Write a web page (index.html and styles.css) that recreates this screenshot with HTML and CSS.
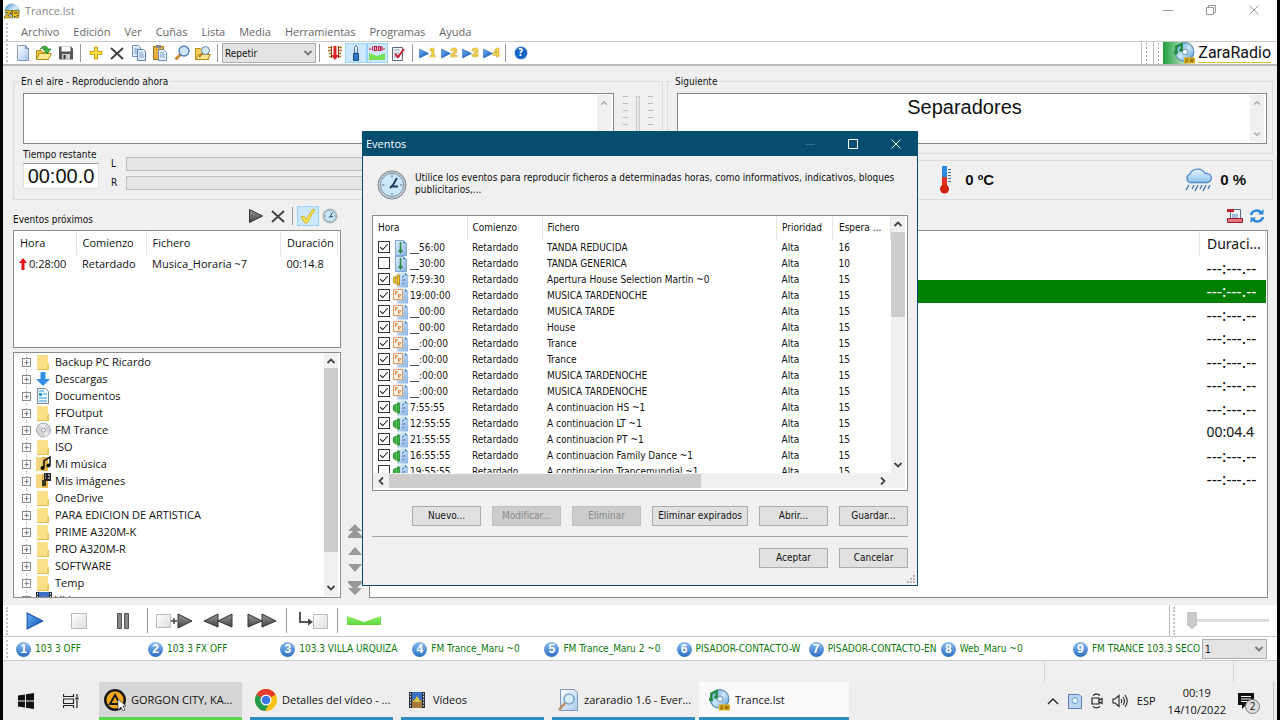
FILE: index.html
```html
<!DOCTYPE html>
<html lang="es">
<head>
    <meta charset="UTF-8">
    <meta name="viewport" content="width=device-width, initial-scale=1.0">
    <title>Trance.lst</title>
    <link rel="stylesheet" href="styles.css">
</head>
<body>
    <!-- Iconos compartidos -->
    <svg class="sprites" width="0" height="0" aria-hidden="true">
        <defs>
            <linearGradient id="gBlue" x1="0" y1="0" x2="1" y2="1"><stop offset="0" stop-color="#6db4f2"/><stop offset="1" stop-color="#0d4fb5"/></linearGradient>
            <linearGradient id="gGray" x1="0" y1="0" x2="0" y2="1"><stop offset="0" stop-color="#999"/><stop offset="1" stop-color="#444"/></linearGradient>
            <linearGradient id="gPage" x1="0" y1="0" x2="1" y2="1"><stop offset="0" stop-color="#fff"/><stop offset="1" stop-color="#a9c8ec"/></linearGradient>
            <linearGradient id="gPageBlue" x1="0" y1="0" x2="1" y2="1"><stop offset="0" stop-color="#e4f0fb"/><stop offset="1" stop-color="#86b2e2"/></linearGradient>
            <linearGradient id="gStop" x1="0" y1="0" x2="1" y2="1"><stop offset="0" stop-color="#fff"/><stop offset="1" stop-color="#ddd"/></linearGradient>
            <linearGradient id="gCloud" x1="0" y1="0" x2="0" y2="1"><stop offset="0" stop-color="#e6f4ff"/><stop offset="1" stop-color="#8fc2ee"/></linearGradient>
            <linearGradient id="gDisc" x1="0" y1="0" x2="1" y2="1"><stop offset="0" stop-color="#3a86c8"/><stop offset=".5" stop-color="#cfe9fa"/><stop offset="1" stop-color="#3b8ccb"/></linearGradient>
            <linearGradient id="gHill" x1="0" y1="0" x2="0" y2="1"><stop offset="0" stop-color="#8cf06c"/><stop offset="1" stop-color="#5fd83c"/></linearGradient>
        </defs>
        <symbol id="i-zara" viewBox="0 0 20 20">
            <circle cx="10.500" cy="9" r="8.500" fill="url(#gDisc)" stroke="#5d8db0"/>
            <circle cx="11" cy="9" r="2.500" fill="#eef7fd" stroke="#7aa5c4"/>
            <path d="M3 9V4l5-2v5" fill="none" stroke="#1d8a3c" stroke-width="2"/>
            <circle cx="2.700" cy="9.500" r="1.800" fill="#1d8a3c"/><circle cx="7.300" cy="7.500" r="1.500" fill="#1d8a3c"/>
            <path d="M10 14h10v5.500H10z" fill="#e0b31f"/>
            <path d="M11 15.500h3l-3 2.500h3M16 18.500V15.500h2.500V17H16l2.500 1.500" fill="none" stroke="#7a5a06" stroke-width=".7"/>
        </symbol>
        <symbol id="i-zr" viewBox="0 0 16 16">
            <circle cx="8" cy="8" r="7.500" fill="url(#gDisc)"/>
            <path d="M1 8.500h5.500L1.500 14H7M9.500 15V8.500H14V11.500H9.500l5 3" fill="none" stroke="#5d4a08" stroke-width="2.600"/>
            <path d="M1 8.500h5.500L1.500 14H7M9.500 15V8.500H14V11.500H9.500l5 3" fill="none" stroke="#e8c32c" stroke-width="1.300"/>
        </symbol>
        <symbol id="i-new" viewBox="0 0 16 16"><path d="M2.500.5h8l3 3v12h-11z" fill="url(#gPage)" stroke="#8699b5"/><path d="M10.500.5v3h3" fill="#8db7e8" stroke="#6d8fbd"/></symbol>
        <symbol id="i-open" viewBox="0 0 16 16"><path d="M.5 14.500V5.500h5l1 2h6v7z" fill="#f0c33c" stroke="#b58b1b"/><path d="M.5 14.500l3-6h12l-3 6z" fill="#fde88c" stroke="#b58b1b"/><path d="M4 4c3-4 7-4 8 0h3l-4 5-4-5h2C8 3 6 3 4 4z" fill="#3fae3c" stroke="#1b7a1d" stroke-width=".6"/></symbol>
        <symbol id="i-save" viewBox="0 0 16 16"><path d="M1 1.500h12l2 2v11H1z" fill="#555"/><path d="M3.500 1.500h9v5h-9z" fill="#fff"/><path d="M4 9h8v5.500H4z" fill="#ccc"/><path d="M5.500 10h2v4h-2z" fill="#333"/></symbol>
        <symbol id="i-plus" viewBox="0 0 16 16"><path d="M6.500 2h3v4.500H14v3H9.500V14h-3V9.500H2v-3h4.500z" fill="#ffe24a" stroke="#cf9f06"/></symbol>
        <symbol id="i-x" viewBox="0 0 16 16"><path d="M2 3l12 11M14 3L2 14" stroke="#444" stroke-width="2" fill="none"/></symbol>
        <symbol id="i-copy" viewBox="0 0 16 16"><path d="M1.500.5h6l2 2v9h-8z" fill="#e2edfa" stroke="#6f8fc0"/><path d="M3 4h4M3 6h5M3 8h5" stroke="#7d9fd0"/><path d="M6.500 4.500h6l2 2v9h-8z" fill="#e2edfa" stroke="#5c7fb8"/><path d="M8 8h4M8 10h5M8 12h5" stroke="#7d9fd0"/></symbol>
        <symbol id="i-paste" viewBox="0 0 16 16"><path d="M1.500 1.500h10v13h-10z" fill="#e9b13c" stroke="#99701a"/><path d="M4 0h5v3H4z" fill="#888"/><path d="M6.500 4.500h5l3 3v8h-8z" fill="#e4effb" stroke="#6b89b5"/><path d="M8 8h4M8 10h5M8 12h5" stroke="#7d9fd0"/></symbol>
        <symbol id="i-find" viewBox="0 0 16 16"><path d="M7 9l-5.500 5.500" stroke="#c98d33" stroke-width="3"/><circle cx="10" cy="6" r="5" fill="#cfe6fa" stroke="#4f7fc0" stroke-width="1.400"/></symbol>
        <symbol id="i-findf" viewBox="0 0 16 16"><path d="M.5 14.500v-11h5l1 2h7v9z" fill="#f5cf54" stroke="#b58b1b"/><path d="M.5 14.500l3-5h12l-3 5z" fill="#fde88c" stroke="#b58b1b"/><circle cx="10.500" cy="5.500" r="4" fill="#d5eafa" stroke="#5f83ad"/><path d="M7.500 8.500L4 12" stroke="#b07c31" stroke-width="2"/></symbol>
        <symbol id="i-meter" viewBox="0 0 16 16"><path d="M1 2.500h4M1 5.500h4M2 8.500h3M2 11.500h3M11 2.500h4M11 5.500h4M11 8.500h3M11 11.500h3" stroke="#a8781c" stroke-width="1.400"/><path d="M4.500 1v12M11.500 1v12" stroke="#8e341c"/><path d="M6.500 1h3v9h2.500l-4 5-4-5h2.500z" fill="#d92222"/></symbol>
        <symbol id="i-mic" viewBox="0 0 16 16"><path d="M6.500 2.500l1.500-2 1.500 2V8h-3z" fill="#dceaf5" stroke="#56718c"/><path d="M5.500 8.500h5v7h-5z" fill="#2f79c9" stroke="#174a84"/></symbol>
        <symbol id="i-onair" viewBox="0 0 16 16"><path d="M0 4h2M3.500 1.500v4M5.500 1.500v4h2v-4zM9.500 1.500h2v4h-2zM13 1.500v4M14 4h2" fill="none" stroke="#c9163c" stroke-width="1.200"/><path d="M0 8l8 3 8-3v7H0z" fill="#77e054"/></symbol>
        <symbol id="i-check" viewBox="0 0 16 16"><path d="M2.500 2.500h10v13h-10z" fill="#f4f7fb" stroke="#596779"/><path d="M4 5h6M4 8h5M4 12h6" stroke="#8b99ad"/><path d="M5 9l3 3 6-8" fill="none" stroke="#c8202c" stroke-width="2"/></symbol>
        <symbol id="i-play" viewBox="0 0 16 16"><path d="M1 1l14 7-14 7z" fill="url(#gBlue)" stroke="#1557b0"/></symbol>
        <symbol id="i-playg" viewBox="0 0 16 16"><path d="M1.500 1.500l13 6.500-13 6.500z" fill="url(#gGray)" stroke="#333"/></symbol>
        <symbol id="i-tick" viewBox="0 0 16 16"><path d="M1 9l3-1 2 3.500L13 1l2 .5L7 15H5z" fill="#ffe64c" stroke="#c9a51d" stroke-width=".8"/></symbol>
        <symbol id="i-clock" viewBox="0 0 32 32"><circle cx="16" cy="16" r="14" fill="#c3cad1" stroke="#75818c"/><circle cx="16" cy="16" r="11.500" fill="#cbe9fb" stroke="#7f93a5"/><path d="M16 6v2.500M16 24v2.500M6 16h2.500M24 16h2.500" stroke="#8a98a5" stroke-width="1.500"/><path d="M14 19l3-3 4-7M15 17.500h7" stroke="#1e3c5a" stroke-width="2" fill="none"/></symbol>
        <symbol id="i-folder" viewBox="0 0 16 16"><path d="M1 1h11v14H1z" fill="#fbe08a"/><path d="M11 10l2-1.500V15h-2z" fill="#f0c95c"/><path d="M1 15.500h12" stroke="#e3bb4c"/></symbol>
        <symbol id="i-down" viewBox="0 0 16 16"><path d="M4.500 1h5v7H14l-7 7-7-7h4.500z" fill="#3390e6"/></symbol>
        <symbol id="i-doc" viewBox="0 0 16 16"><path d="M1.500.5h8l3 3v12h-11z" fill="#eef7fc" stroke="#7a8790"/><path d="M3 5h3v3H3z" fill="#2e9bd0"/><path d="M3 3h5M7 6h4M3 10h8M3 13h8" stroke="#2e9bd0"/></symbol>
        <symbol id="i-cd" viewBox="0 0 16 16"><circle cx="7.500" cy="8" r="7" fill="#d3d5d8" stroke="#a8abb0"/><path d="M7.500 8L4 2h6zM7.500 8l6 3-4 4z" fill="#ececee"/><circle cx="7.500" cy="8" r="2" fill="#f7f7f7" stroke="#999"/></symbol>
        <symbol id="i-music" viewBox="0 0 16 16"><path d="M0 1h12v14H0z" fill="#e2b546"/><path d="M0 1h6v14H0z" fill="#f6d77d"/><path d="M8 12V5l6-4v8" fill="none" stroke="#111" stroke-width="1.500"/><circle cx="6.500" cy="12" r="2" fill="#111"/><circle cx="12.500" cy="9.500" r="2" fill="#111"/></symbol>
        <symbol id="i-pics" viewBox="0 0 16 16"><path d="M0 1h12v14H0z" fill="#e2b546"/><path d="M0 1h6v14H0z" fill="#f6d77d"/><path d="M8 0h7v8H8z" fill="#222"/><path d="M9 2h1M12 2h2M9 5h1M12 5h2" stroke="#fff"/><path d="M6 7h4v6H6z" fill="#3b3421"/></symbol>
        <symbol id="i-film" viewBox="0 0 16 16"><path d="M0 0h16v16H0z" fill="#26303f"/><path d="M3 0h10v16H3z" fill="#3b6fc4"/><path d="M3 8h10v8H3z" fill="#a57a3a"/><path d="M4 10l4-6 4 6z" fill="#d6c04a"/><path d="M1.500 1v15M14.500 1v15" stroke="#ddd" stroke-dasharray="1.500 1.500"/></symbol>
        <symbol id="i-evdown" viewBox="0 0 16 16"><path d="M2.500.5h8l3 3v12h-11z" fill="url(#gPageBlue)" stroke="#7fa6d2"/><path d="M10.500.5v3h3z" fill="#4e86c4"/><path d="M7.500 2v9" stroke="#2a8a3f" stroke-width="1.500"/><path d="M5 10h5l-2.500 4z" fill="#2a8a3f"/></symbol>
        <symbol id="i-evpage" viewBox="0 0 16 16"><path d="M4 .5h8l3 3v12H4z" fill="url(#gPageBlue)"/><path d="M12 .5v3h3z" fill="#4e86c4"/></symbol>
        <symbol id="i-evgreen" viewBox="0 0 16 16"><use href="#i-evpage"/><path d="M0 6l3-2v8l-3-2zM4 3h2.500v10H4z" fill="#37b53d" stroke="#1e8427" stroke-width=".7"/><path d="M9 5l2-1M9 8h3M9 11l2 1" stroke="#3d74b2"/></symbol>
        <symbol id="i-evyellow" viewBox="0 0 16 16"><use href="#i-evpage"/><path d="M0 6l3-2v8l-3-2zM4 3h2.500v10H4z" fill="#f0c030" stroke="#a57a10" stroke-width=".7"/><path d="M9 5l2-1M9 8h3M9 11l2 1" stroke="#3d74b2"/></symbol>
        <symbol id="i-evrand" viewBox="0 0 16 16"><use href="#i-evpage"/><path d="M.5 1.500h9v10h-9z" fill="#fff5ea" stroke="#e2945a"/><path d="M2.500 7V3.500h2M2.500 5h2M5.500 10V6.500h2v1.500h-2l2 2" fill="none" stroke="#d9762f" stroke-width=".8"/></symbol>
        <symbol id="i-up" viewBox="0 0 10 6"><path d="M1.500 5L5 1.500 8.500 5" fill="none" stroke="currentColor" stroke-width="1.800"/></symbol>
        <symbol id="i-dn" viewBox="0 0 10 6"><path d="M1.500 1L5 4.500 8.500 1" fill="none" stroke="currentColor" stroke-width="1.800"/></symbol>
        <symbol id="i-lt" viewBox="0 0 6 10"><path d="M5 1.500L1.500 5 5 8.500" fill="none" stroke="currentColor" stroke-width="1.800"/></symbol>
        <symbol id="i-rt" viewBox="0 0 6 10"><path d="M1 1.500L4.500 5 1 8.500" fill="none" stroke="currentColor" stroke-width="1.800"/></symbol>
    </svg>

    <div class="app">
        <header class="titlebar">
            <svg class="ico"><use href="#i-zr"/></svg>
            <span>Trance.lst</span>
            <div class="win-buttons">
                <button aria-label="Minimizar"><svg width="10" height="10"><path d="M0 5.500h10" stroke="#999"/></svg></button>
                <button aria-label="Restaurar"><svg width="10" height="10" fill="none" stroke="#999"><path d="M.5 2.500h7v7h-7zM2.500 2.500v-2h7v7h-2"/></svg></button>
                <button aria-label="Cerrar"><svg width="10" height="10" stroke="#999"><path d="M.5.5l9 9M9.500.5l-9 9"/></svg></button>
            </div>
        </header>

        <nav class="menubar">
            <span class="grip"></span>
            <a href="#">Archivo</a>
            <a href="#">Edición</a>
            <a href="#">Ver</a>
            <a href="#">Cuñas</a>
            <a href="#">Lista</a>
            <a href="#">Media</a>
            <a href="#">Herramientas</a>
            <a href="#">Programas</a>
            <a href="#">Ayuda</a>
        </nav>

        <div class="toolbar">
            <span class="grip"></span>
            <div class="tools three">
                <button aria-label="Nuevo"><svg class="ico"><use href="#i-new"/></svg></button>
                <button aria-label="Abrir"><svg class="ico"><use href="#i-open"/></svg></button>
                <button aria-label="Guardar"><svg class="ico"><use href="#i-save"/></svg></button>
            </div>
            <span class="sep"></span>
            <div class="tools six">
                <button aria-label="Añadir"><svg class="ico"><use href="#i-plus"/></svg></button>
                <button aria-label="Borrar"><svg class="ico"><use href="#i-x"/></svg></button>
                <button aria-label="Copiar"><svg class="ico"><use href="#i-copy"/></svg></button>
                <button aria-label="Pegar"><svg class="ico"><use href="#i-paste"/></svg></button>
                <button aria-label="Buscar"><svg class="ico"><use href="#i-find"/></svg></button>
                <button aria-label="Buscar fichero"><svg class="ico"><use href="#i-findf"/></svg></button>
            </div>
            <span class="sep"></span>
            <div class="combo mode">
                <select aria-label="Modo"><option>Repetir</option></select>
                <svg width="10" height="6"><use href="#i-dn"/></svg>
            </div>
            <span class="sep"></span>
            <div class="tools four">
                <button aria-label="Vúmetro"><svg class="ico"><use href="#i-meter"/></svg></button>
                <button class="on" aria-label="Micrófono"><svg class="ico"><use href="#i-mic"/></svg></button>
                <button class="on" aria-label="Mezcla"><svg class="ico"><use href="#i-onair"/></svg></button>
                <button aria-label="Opciones"><svg class="ico"><use href="#i-check"/></svg></button>
            </div>
            <span class="sep"></span>
            <div class="tools four players">
                <button><svg width="10" height="11"><use href="#i-play"/></svg>1</button>
                <button><svg width="10" height="11"><use href="#i-play"/></svg>2</button>
                <button><svg width="10" height="11"><use href="#i-play"/></svg>3</button>
                <button><svg width="10" height="11"><use href="#i-play"/></svg>4</button>
            </div>
            <span class="sep"></span>
            <button class="help" aria-label="Ayuda"><span>?</span></button>
            <div class="brand">
                <span class="grip line"></span>
                <span class="grip line"></span>
                <div class="brand-disc"><svg width="22" height="22"><use href="#i-zara"/></svg></div>
                <span class="brand-name">ZaraRadio</span>
            </div>
        </div>

        <main>
            <div class="top">
                <fieldset class="onair">
                    <legend>En el aire - Reproduciendo ahora</legend>
                    <div class="onair-main">
                        <div class="memo">
                            <div class="memo-text"></div>
                            <div class="vscroll off"><svg width="8" height="6"><use href="#i-up"/></svg><svg width="8" height="6"><use href="#i-dn"/></svg></div>
                        </div>
                        <div class="meters">
                            <div class="remaining">
                                <span>Tiempo restante</span>
                                <output>00:00.0</output>
                            </div>
                            <div class="vu"><span>L</span><div></div><span>R</span><div></div></div>
                        </div>
                    </div>
                    <div class="volume">
                        <span class="ticks"></span>
                        <input type="range" class="vrange" aria-label="Volumen" value="0" disabled>
                        <span class="ticks"></span>
                    </div>
                </fieldset>
                <div class="top-right">
                    <fieldset class="next">
                        <legend>Siguiente</legend>
                        <div class="memo">
                            <div class="memo-text">Separadores</div>
                            <div class="vscroll off"><svg width="8" height="6"><use href="#i-up"/></svg><svg width="8" height="6"><use href="#i-dn"/></svg></div>
                        </div>
                    </fieldset>
                    <div class="weather">
                        <div class="temp">
                            <svg width="12" height="28"><path d="M3 0h5v12H3z" fill="#2b8be0"/><path d="M3 11h5v10H3z" fill="#e03020"/><circle cx="5.500" cy="23" r="4.500" fill="#d3200f"/><path d="M9 3.500h3M9 6.500h3M9 9.500h3M9 12.500h3M9 15.500h3" stroke="#4b6f95"/></svg>
                            0 ºC
                        </div>
                        <div class="rain">
                            <svg width="30" height="24"><path d="M6 14.500a4.500 4.500 0 0 1 0-8.500 8 7 0 0 1 15-.5 5 4.500 0 0 1 2.500 9z" fill="url(#gCloud)" stroke="#4d8bc9" stroke-width="1.300"/><path d="M5 17l-3 5M10 17l-2 4M14 17l-3 6M18 17l-2 4M22 17l-3 6M26 17l-2 4" stroke="#3a74b8" stroke-width="1.300"/></svg>
                            0 %
                        </div>
                    </div>
                </div>
            </div>

            <div class="bottom">
                <div class="side">
                    <div class="side-head">
                        <span>Eventos próximos</span>
                        <button aria-label="Reproducir"><svg class="ico"><use href="#i-playg"/></svg></button>
                        <button aria-label="Quitar"><svg class="ico"><use href="#i-x"/></svg></button>
                        <span class="sep"></span>
                        <button class="on" aria-label="Activar eventos"><svg class="ico"><use href="#i-tick"/></svg></button>
                        <button aria-label="Eventos"><svg class="ico"><use href="#i-clock"/></svg></button>
                    </div>
                    <div class="upcoming">
                        <table>
                            <thead>
                                <tr><th class="u-hora">Hora</th><th class="u-com">Comienzo</th><th>Fichero</th><th class="u-dur">Duración</th></tr>
                            </thead>
                            <tbody>
                                <tr><td class="first"><svg width="8" height="12"><path d="M4 0l4 5H5.500v7h-3V5H0z" fill="#e3101c"/></svg>0:28:00</td><td>Retardado</td><td>Musica_Horaria ~7</td><td>00:14.8</td></tr>
                            </tbody>
                        </table>
                    </div>
                    <div class="tree">
                        <ul>
                            <li><svg class="ico"><use href="#i-folder"/></svg>Backup PC Ricardo</li>
                            <li><svg class="ico"><use href="#i-down"/></svg>Descargas</li>
                            <li><svg class="ico"><use href="#i-doc"/></svg>Documentos</li>
                            <li><svg class="ico"><use href="#i-folder"/></svg>FFOutput</li>
                            <li><svg class="ico"><use href="#i-cd"/></svg>FM Trance</li>
                            <li><svg class="ico"><use href="#i-folder"/></svg>ISO</li>
                            <li><svg class="ico"><use href="#i-music"/></svg>Mi música</li>
                            <li><svg class="ico"><use href="#i-pics"/></svg>Mis imágenes</li>
                            <li><svg class="ico"><use href="#i-folder"/></svg>OneDrive</li>
                            <li><svg class="ico"><use href="#i-folder"/></svg>PARA EDICION DE ARTISTICA</li>
                            <li><svg class="ico"><use href="#i-folder"/></svg>PRIME A320M-K</li>
                            <li><svg class="ico"><use href="#i-folder"/></svg>PRO A320M-R</li>
                            <li><svg class="ico"><use href="#i-folder"/></svg>SOFTWARE</li>
                            <li><svg class="ico"><use href="#i-folder"/></svg>Temp</li>
                            <li><svg class="ico"><use href="#i-film"/></svg>Vídeos</li>
                        </ul>
                        <div class="vscroll"><svg width="10" height="6"><use href="#i-up"/></svg><div class="thumb"></div><svg width="10" height="6"><use href="#i-dn"/></svg></div>
                    </div>
                </div>
                <div class="movers">
                    <button aria-label="Al principio"><svg width="14" height="14" fill="#999"><path d="M7 0l7 7H0zM7 5l7 7v2H0v-2z"/></svg></button>
                    <button aria-label="Subir"><svg width="14" height="8" fill="#999"><path d="M7 0l7 8H0z"/></svg></button>
                    <button aria-label="Bajar"><svg width="14" height="8" fill="#999"><path d="M7 8l7-8H0z"/></svg></button>
                    <button aria-label="Al final"><svg width="14" height="14" fill="#999"><path d="M7 14l7-7H0zM7 9l7-7V0H0v2z"/></svg></button>
                </div>
                <div class="playlist-col">
                    <div class="playlist-head">
                        <button aria-label="Exportar"><svg class="ico" viewBox="0 0 16 16"><path d="M3.500 1.500h10v9h-10z" fill="#eef3fa" stroke="#5a6b85"/><path d="M5 7h6M5 9h6" stroke="#5a86c4"/><path d="M0 1h7v3H0z" fill="#c2202c"/><path d="M.5 10.500h15v4H.5z" fill="#e2747c" stroke="#9d1a26"/></svg></button>
                        <button aria-label="Recargar"><svg class="ico" viewBox="0 0 16 16" fill="none" stroke="#2d8ad8" stroke-width="2.500"><path d="M2 7c1-5 8-6 10-2M14 9c-1 5-8 6-10 2"/><path d="M14.500 1v5.500H9zM1.500 15V9.500H7z" fill="#2d8ad8" stroke="none"/></svg></button>
                    </div>
                    <div class="playlist">
                        <table>
                            <thead><tr><th></th><th class="p-dur">Duraci...</th></tr></thead>
                            <tbody>
                                <tr><td></td><td>---:---.--</td></tr>
                                <tr class="current"><td></td><td>---:---.--</td></tr>
                                <tr><td></td><td>---:---.--</td></tr>
                                <tr><td></td><td>---:---.--</td></tr>
                                <tr><td></td><td>---:---.--</td></tr>
                                <tr><td></td><td>---:---.--</td></tr>
                                <tr><td></td><td>---:---.--</td></tr>
                                <tr><td></td><td class="time">00:04.4</td></tr>
                                <tr><td></td><td>---:---.--</td></tr>
                                <tr><td></td><td>---:---.--</td></tr>
                            </tbody>
                        </table>
                    </div>
                </div>
            </div>
        </main>

        <div class="transport">
            <span class="grip"></span>
            <button aria-label="Reproducir"><svg width="18" height="18"><use href="#i-play"/></svg></button>
            <button aria-label="Parar"><svg width="18" height="18"><path d="M1.500 1.500h15v15h-15z" fill="url(#gStop)" stroke="#bbb"/></svg></button>
            <button aria-label="Pausa"><svg width="14" height="18"><path d="M1.500 1.500h4v15h-4zM8.500 1.500h4v15h-4z" fill="#888" stroke="#555"/></svg></button>
            <span class="sep"></span>
            <button aria-label="Parar y seguir"><svg width="36" height="18"><path d="M.5 2.500h14v13H.5z" fill="url(#gStop)" stroke="#bbb"/><path d="M15 9h6M18 6v6" stroke="#444" stroke-width="1.500"/><path d="M22 2l14 7-14 7z" fill="url(#gGray)" stroke="#333"/></svg></button>
            <button aria-label="Anterior"><svg width="30" height="18"><path d="M15 2L1 9l14 6zM29 2L15 9l14 6z" fill="url(#gGray)" stroke="#333"/></svg></button>
            <button aria-label="Siguiente"><svg width="30" height="18"><path d="M1 2l14 7-14 6zM15 2l14 7-14 6z" fill="url(#gGray)" stroke="#333"/></svg></button>
            <span class="sep"></span>
            <button aria-label="Saltar"><svg width="30" height="20"><path d="M2 1v10h10" fill="none" stroke="#555" stroke-width="2"/><path d="M10 7.500l5 3.500-5 3.500z" fill="#444"/><path d="M15.500 3.500h14v14h-14z" fill="url(#gStop)" stroke="#bbb"/></svg></button>
            <span class="sep"></span>
            <button aria-label="Mezclar"><svg width="34" height="10"><path d="M0 0l17 6 17-6v9H0z" fill="url(#gHill)"/></svg></button>
            <div class="seek">
                <span class="grip"></span>
                <input type="range" aria-label="Posición" value="0" disabled>
            </div>
        </div>

        <div class="carts">
            <span class="grip"></span>
            <div class="cart-list">
                <button><b>1</b>103 3 OFF</button>
                <button><b>2</b>103 3 FX OFF</button>
                <button><b>3</b>103.3 VILLA URQUIZA</button>
                <button><b>4</b>FM Trance_Maru ~0</button>
                <button><b>5</b>FM Trance_Maru 2 ~0</button>
                <button><b>6</b>PISADOR-CONTACTO-W</button>
                <button><b>7</b>PISADOR-CONTACTO-EN</button>
                <button><b>8</b>Web_Maru ~0</button>
                <button><b>9</b>FM TRANCE 103.3 SECO</button>
            </div>
            <div class="combo bank">
                <select aria-label="Banco"><option>1</option></select>
                <svg width="10" height="6"><use href="#i-dn"/></svg>
            </div>
        </div>

        <div class="statusbar"><span></span><span></span><span></span></div>

        <section class="dialog" role="dialog" aria-labelledby="dlgTitle">
            <div class="dialog-title">
                <h2 id="dlgTitle">Eventos</h2>
                <button aria-label="Minimizar"><svg width="10" height="10"><path d="M0 5.500h10" stroke="#2f6f90"/></svg></button>
                <button aria-label="Maximizar"><svg width="10" height="10"><path d="M.5.5h9v9h-9z" fill="none" stroke="#fff"/></svg></button>
                <button aria-label="Cerrar"><svg width="10" height="10"><path d="M.5.5l9 9M9.500.5l-9 9" stroke="#fff"/></svg></button>
            </div>
            <div class="dialog-body">
                <div class="intro">
                    <svg width="32" height="32"><use href="#i-clock"/></svg>
                    <p>Utilice los eventos para reproducir ficheros a determinadas horas, como informativos, indicativos, bloques publicitarios,...</p>
                </div>
                <div class="events">
                    <div class="events-view">
                        <table>
                            <thead>
                                <tr><th class="e-hora">Hora</th><th class="e-com">Comienzo</th><th>Fichero</th><th class="e-pri">Prioridad</th><th class="e-esp">Espera ...</th></tr>
                            </thead>
                            <tbody>
                                <tr><td><label><input type="checkbox" checked><svg class="ico"><use href="#i-evdown"/></svg>__56:00</label></td><td>Retardado</td><td>TANDA REDUCIDA</td><td>Alta</td><td>16</td></tr>
                                <tr><td><label><input type="checkbox"><svg class="ico"><use href="#i-evdown"/></svg>__30:00</label></td><td>Retardado</td><td>TANDA GENERICA</td><td>Alta</td><td>10</td></tr>
                                <tr><td><label><input type="checkbox" checked><svg class="ico"><use href="#i-evyellow"/></svg>7:59:30</label></td><td>Retardado</td><td>Apertura House Selection Martin ~0</td><td>Alta</td><td>15</td></tr>
                                <tr><td><label><input type="checkbox" checked><svg class="ico"><use href="#i-evrand"/></svg>19:00:00</label></td><td>Retardado</td><td>MUSICA TARDENOCHE</td><td>Alta</td><td>15</td></tr>
                                <tr><td><label><input type="checkbox" checked><svg class="ico"><use href="#i-evrand"/></svg>__00:00</label></td><td>Retardado</td><td>MUSICA TARDE</td><td>Alta</td><td>15</td></tr>
                                <tr><td><label><input type="checkbox" checked><svg class="ico"><use href="#i-evrand"/></svg>__00:00</label></td><td>Retardado</td><td>House</td><td>Alta</td><td>15</td></tr>
                                <tr><td><label><input type="checkbox" checked><svg class="ico"><use href="#i-evrand"/></svg>__:00:00</label></td><td>Retardado</td><td>Trance</td><td>Alta</td><td>15</td></tr>
                                <tr><td><label><input type="checkbox" checked><svg class="ico"><use href="#i-evrand"/></svg>__:00:00</label></td><td>Retardado</td><td>Trance</td><td>Alta</td><td>15</td></tr>
                                <tr><td><label><input type="checkbox" checked><svg class="ico"><use href="#i-evrand"/></svg>__:00:00</label></td><td>Retardado</td><td>MUSICA TARDENOCHE</td><td>Alta</td><td>15</td></tr>
                                <tr><td><label><input type="checkbox" checked><svg class="ico"><use href="#i-evrand"/></svg>__:00:00</label></td><td>Retardado</td><td>MUSICA TARDENOCHE</td><td>Alta</td><td>15</td></tr>
                                <tr><td><label><input type="checkbox" checked><svg class="ico"><use href="#i-evgreen"/></svg>7:55:55</label></td><td>Retardado</td><td>A continuacion HS ~1</td><td>Alta</td><td>15</td></tr>
                                <tr><td><label><input type="checkbox" checked><svg class="ico"><use href="#i-evgreen"/></svg>12:55:55</label></td><td>Retardado</td><td>A continuacion LT ~1</td><td>Alta</td><td>15</td></tr>
                                <tr><td><label><input type="checkbox" checked><svg class="ico"><use href="#i-evgreen"/></svg>21:55:55</label></td><td>Retardado</td><td>A continuacion PT ~1</td><td>Alta</td><td>15</td></tr>
                                <tr><td><label><input type="checkbox" checked><svg class="ico"><use href="#i-evgreen"/></svg>16:55:55</label></td><td>Retardado</td><td>A continuacion Family Dance ~1</td><td>Alta</td><td>15</td></tr>
                                <tr><td><label><input type="checkbox"><svg class="ico"><use href="#i-evgreen"/></svg>19:55:55</label></td><td>Retardado</td><td>A continuacion Trancemundial ~1</td><td>Alta</td><td>15</td></tr>
                            </tbody>
                        </table>
                    </div>
                    <div class="vscroll"><svg width="10" height="6"><use href="#i-up"/></svg><div class="thumb"></div><svg width="10" height="6"><use href="#i-dn"/></svg></div>
                    <div class="hscroll"><svg width="6" height="10"><use href="#i-lt"/></svg><div class="thumb"></div><svg width="6" height="10"><use href="#i-rt"/></svg></div>
                    <div class="corner"></div>
                </div>
                <div class="buttons">
                    <button>Nuevo...</button>
                    <button disabled>Modificar...</button>
                    <button disabled>Eliminar</button>
                    <button class="wide">Eliminar expirados</button>
                    <button>Abrir...</button>
                    <button>Guardar...</button>
                </div>
                <hr>
                <div class="buttons">
                    <button>Aceptar</button>
                    <button>Cancelar</button>
                </div>
            </div>
            <svg class="resize" width="8" height="8" fill="#b5b5b5"><path d="M6 0h2v2H6zM6 3h2v2H6zM3 3h2v2H3zM6 6h2v2H6zM3 6h2v2H3zM0 6h2v2H0z"/></svg>
        </section>
    </div>

    <footer class="taskbar">
        <button class="start" aria-label="Inicio"><svg width="16" height="16"><path d="M0 2.500l7-1v6H0zM8 1.300L16 0v7.500H8zM0 8.500h7v6l-7-1zM8 8.500h8V16l-8-1.300z" fill="#111"/></svg></button>
        <button class="start" aria-label="Vista de tareas"><svg width="16" height="14" fill="none" stroke="#222" stroke-width="1.200"><path d="M.5 0v2.500h10V0M.5 5h10v4.500H.5zM.5 14v-2.500h10V14M14 0v3M14 6v8"/><path d="M12.500 4.500h3" stroke-width="2"/></svg></button>
        <div class="tasks">
            <button class="task playing">
                <svg width="22" height="22"><circle cx="11" cy="11" r="11" fill="#1a1a1a"/><circle cx="11" cy="11" r="8.500" fill="#f5a81c"/><path d="M11 6l5 9H6z" fill="none" stroke="#1a1a1a" stroke-width="2"/><path d="M14 10v11l3-3 2 4 2-1-2-4h3z" fill="#fff" stroke="#333" stroke-width=".7"/></svg>
                GORGON CITY, KA...
            </button>
            <button class="task">
                <svg width="22" height="22" viewBox="0 0 22 22"><circle cx="11" cy="11" r="11" fill="#fbc116"/><path d="M11 11L1.500 5.500A11 11 0 0 1 20.500 5.500z" fill="#e33b2e"/><path d="M1.500 5.500A11 11 0 0 0 10 22l4-7-3-4z" fill="#229a4a"/><path d="M1.500 5.500h19L11 11z" fill="#e33b2e"/><circle cx="11" cy="11" r="5.500" fill="#fff"/><circle cx="11" cy="11" r="4.300" fill="#3a78e8"/></svg>
                Detalles del vídeo - ...
            </button>
            <button class="task">
                <svg width="22" height="20" viewBox="-3 0 22 16"><use href="#i-film" width="16" height="16"/></svg>
                Vídeos
            </button>
            <button class="task">
                <svg width="22" height="22"><path d="M3.500.5h14l3 3v18h-17z" fill="url(#gPage)" stroke="#7f97b8"/><circle cx="12" cy="10" r="5" fill="#d9eefb" stroke="#79a6cf" stroke-width="1.500"/><path d="M8 14l-6 7" stroke="#b98a59" stroke-width="2.500"/></svg>
                zararadio 1.6 - Ever...
            </button>
            <button class="task active">
                <svg width="22" height="22"><use href="#i-zara"/></svg>
                Trance.lst
            </button>
        </div>
        <div class="tray">
            <button aria-label="Iconos ocultos"><svg width="12" height="8"><path d="M1 7l5-5 5 5" fill="none" stroke="#222" stroke-width="1.300"/></svg></button>
            <button aria-label="Everything"><svg width="14" height="16"><path d="M.5 1.500h10l3 2v12H.5z" fill="#bcd6f2" stroke="#5a7fae"/><circle cx="7" cy="7.500" r="3" fill="#e6f3fc" stroke="#5f9bd3"/></svg></button>
            <button aria-label="Reunión"><svg width="12" height="16" fill="none" stroke="#222" stroke-width="1.200"><path d="M1 5h7v6H1zM8 7l3-1.500v5L8 9M2 2.500c2-1.500 5-1.500 7 0M2 13.500c2 1.500 5 1.500 7 0"/></svg></button>
            <button aria-label="Volumen"><svg width="16" height="14" fill="none" stroke="#222" stroke-width="1.100"><path d="M1 5h2l4-3.500v11L3 9H1zM9 5q1.500 2 0 4M11 3q3 4 0 8M13 1q4.500 6 0 12"/></svg></button>
            <span class="lang">ESP</span>
            <time>00:19<br>14/10/2022</time>
            <button class="notes" aria-label="Notificaciones"><svg width="16" height="16"><path d="M0 0h16v12H8l-4 4v-4H0z" fill="#111"/><path d="M3 3.500h10M3 6h10M3 8.500h7" stroke="#fff"/></svg><i>2</i></button>
        </div>
    </footer>
</body>
</html>
```
FILE: styles.css
```css
* {
    box-sizing: border-box;
}

body {
    display: flex;
    flex-direction: column;
    height: 100vh;
    margin: 0;
    padding: 0 3px;
    overflow: hidden;
    background: #000;
    font-family: "DejaVu Sans Condensed", "DejaVu Sans", sans-serif;
    font-size: 10px;
    line-height: 12px;
    color: #111;
}

button {
    padding: 0;
    border: none;
    background: none;
    font: inherit;
    color: inherit;
}

select {
    font: inherit;
}

svg {
    flex: none;
    display: block;
}

.sprites {
    position: absolute;
}

.ico {
    width: 16px;
    height: 16px;
}

.app {
    position: relative;
    display: flex;
    flex-direction: column;
    flex: 1;
    min-height: 0;
    background: #f0f0f0;
}

.titlebar,
.menubar,
.upcoming,
.tree,
.taskbar {
    font-family: "Open Sans", sans-serif;
    font-size: 11px;
}

/* Barra de titulo y menu */
.titlebar {
    display: flex;
    align-items: center;
    gap: 5px;
    height: 22px;
    padding-left: 1px;
    background: #fff;
    color: #888;
}

.win-buttons {
    display: flex;
    margin-left: auto;
    padding: 0 2px 2px 0;
}

.win-buttons button {
    display: flex;
    justify-content: center;
    width: 43px;
}

.menubar {
    display: flex;
    align-items: center;
    height: 20px;
    background: #fff;
    border-bottom: 1px solid #c8c8c8;
}

.menubar a {
    margin-right: 14px;
    color: #666;
    text-decoration: none;
}

.menubar .grip {
    margin-right: 13px;
}

.grip {
    width: 2px;
    height: 18px;
    margin: 0 5px 0 3px;
    border-left: 2px dotted #c4c4c4;
}

.sep {
    width: 1px;
    height: 18px;
    margin: 0 4px 0 3px;
    background: #999;
}

/* Barra de herramientas */
.toolbar {
    display: flex;
    align-items: center;
    height: 24px;
    background: #fff;
    border-bottom: 2px solid #bbb;
}

.toolbar > .grip {
    margin-right: 4px;
}

.tools {
    display: grid;
    grid-auto-flow: column;
    grid-auto-columns: 1fr;
    height: 20px;
}

.three {
    width: 65px;
}

.six {
    width: 129px;
}

.four {
    width: 85px;
}

.tools button,
.side-head button {
    display: flex;
    align-items: center;
    justify-content: center;
}

button.on {
    background: #cce8ff;
    border: 1px solid #99d1ff;
}

.players button {
    font-family: "Liberation Sans", sans-serif;
    font-size: 12px;
    font-weight: bold;
    color: #f5d44e;
    text-shadow: 0 0 1px #a87c00, 0 0 1px #a87c00;
}

.help {
    width: 21px;
}

.help span {
    display: block;
    width: 12px;
    margin: 0 auto;
    border-radius: 50%;
    background: #1763c6;
    box-shadow: 0 0 2px #1763c6;
    font-weight: bold;
    color: #fff;
}

.combo {
    position: relative;
    display: flex;
}

.combo select {
    width: 100%;
    height: 20px;
    padding: 1px 2px 0;
    appearance: none;
    background: #e3e3e3;
    border: 1px solid #adadad;
    border-radius: 0;
    color: #111;
}

.combo svg {
    position: absolute;
    right: 3px;
    top: 7px;
    color: #777;
    pointer-events: none;
}

.mode {
    width: 94px;
}

.brand {
    display: flex;
    align-items: center;
    height: 22px;
    margin-left: auto;
    padding-right: 6px;
}

.grip.line {
    width: 8px;
    height: 22px;
    margin: 0 4px 0 0;
    border-left: 1px solid #bbb;
    background: radial-gradient(#aaa 1px, transparent 1px) 3px 0 / 3px 4px repeat-y;
}

.grip.line + .grip.line {
    margin-right: 2px;
}

.brand-disc {
    width: 32px;
    height: 22px;
    padding-left: 10px;
    background: linear-gradient(90deg, #1e9e3c, #fff);
}

.brand-name {
    margin-left: 3px;
    border-bottom: 1px solid #e0bd2a;
    font-family: Roboto, sans-serif;
    font-size: 16px;
    line-height: 18px;
}

/* Zona superior */
main {
    display: flex;
    flex-direction: column;
    flex: 1;
    min-height: 0;
    padding: 8px 0 7px 10px;
}

.top {
    display: grid;
    grid-template-columns: 650fr 606fr;
    gap: 4px;
    height: 126px;
    padding-right: 4px;
}

fieldset {
    min-width: 0;
    margin: 0;
    padding: 0 5px 0 9px;
    border: 1px solid #dcdcdc;
}

legend {
    margin-left: -4px;
    padding: 1px 2px 0;
    line-height: 13px;
}

.onair {
    display: flex;
    gap: 9px;
    padding-right: 6px;
}

.onair-main {
    flex: 1;
}

.memo {
    display: flex;
    height: 51px;
    margin-top: 5px;
    padding: 1px 2px 1px 1px;
    background: #fff;
    border: 1px solid #888;
}

.memo-text {
    flex: 1;
    font-family: "Liberation Sans", sans-serif;
    font-size: 20px;
    line-height: 25px;
    text-align: center;
}

.vscroll {
    display: flex;
    flex-direction: column;
    align-items: center;
    width: 14px;
    padding: 5px 0;
    background: #f0f0f0;
    color: #444;
}

.vscroll .thumb {
    width: 14px;
    margin-top: 4px;
    background: #cdcdcd;
}

.vscroll svg:last-child {
    margin-top: auto;
}

.vscroll.off {
    color: #aaa;
}

.meters {
    display: flex;
    margin-top: 5px;
}

.remaining {
    width: 76px;
    white-space: nowrap;
}

.remaining output {
    display: block;
    height: 26px;
    margin-top: 2px;
    background: #fff;
    border: 1px solid #e0e0e0;
    border-top-color: #999;
    font-family: "Liberation Sans", sans-serif;
    font-size: 20px;
    line-height: 24px;
    text-align: center;
}

.vu {
    flex: 1;
    display: grid;
    grid-template-columns: 15px 1fr;
    grid-auto-rows: 14px;
    align-content: start;
    align-items: center;
    row-gap: 5px;
    margin: 8px 0 0 12px;
}

.vu div {
    height: 14px;
    background: #e6e6e6;
    border: 1px solid #bcbcbc;
}

.volume {
    display: flex;
    gap: 8px;
    height: 100px;
    padding: 8px 3px 0 0;
}

.ticks {
    width: 5px;
    background: repeating-linear-gradient(#bbb 0 1px, transparent 1px 7px);
}

.vrange {
    width: 4px;
    height: 100%;
    margin: 0;
    appearance: none;
    writing-mode: vertical-lr;
    background: #e7e7e7;
    border: 1px solid #ccc;
}

.vrange::-webkit-slider-thumb {
    appearance: none;
}

.top-right {
    display: flex;
    flex-direction: column;
    gap: 6px;
    min-width: 0;
}

.next {
    height: 80px;
}

.weather {
    display: flex;
    justify-content: flex-end;
    gap: 190px;
    height: 40px;
    padding: 0 26px 1px 0;
    border: 1px solid #dcdcdc;
    font-family: "Liberation Sans", sans-serif;
    font-size: 15px;
    font-weight: bold;
}

.temp,
.rain {
    display: flex;
    align-items: center;
    gap: 6px;
}

.temp svg {
    margin-right: 8px;
}

/* Zona inferior */
.bottom {
    display: flex;
    flex: 1;
    min-height: 0;
    padding-right: 9px;
}

.side {
    display: flex;
    flex-direction: column;
    width: 328px;
}

.side-head {
    display: flex;
    align-items: center;
    height: 30px;
    padding-top: 2px;
}

.side-head span:first-child {
    margin-right: auto;
    padding-top: 8px;
}

.side-head button {
    width: 22px;
    height: 20px;
}

table {
    width: 100%;
    border-collapse: collapse;
    table-layout: fixed;
}

th,
td {
    padding: 0;
    text-align: left;
    font-weight: normal;
    white-space: nowrap;
}

.upcoming,
.tree,
.playlist,
.events {
    background: #fff;
    border: 1px solid #8c8c8c;
}

.upcoming {
    height: 118px;
    padding-right: 2px;
}

.upcoming th {
    height: 24px;
    padding-left: 6px;
    border-right: 1px solid #e5e5e5;
}

.upcoming td {
    height: 17px;
    padding-left: 6px;
}

.upcoming .first {
    display: flex;
    align-items: center;
    gap: 2px;
    padding-left: 5px;
}

.u-hora {
    width: 62px;
}

.u-com {
    width: 70px;
}

.u-dur {
    width: 57px;
}

.tree {
    display: flex;
    flex: 1;
    min-height: 0;
    margin-top: 4px;
    padding: 0 2px 1px 0;
    overflow: hidden;
}

.tree ul {
    flex: 1;
    margin: 0;
    padding: 0 0 0 8px;
    list-style: none;
}

.tree li {
    display: flex;
    align-items: center;
    gap: 3px;
    height: 17px;
    background: radial-gradient(#aaa 1px, transparent 1px) 3px 0 / 3px 3px repeat-y;
}

/* cuadrito + de expandir */
.tree li::before {
    content: "+";
    box-sizing: border-box;
    width: 9px;
    height: 9px;
    margin: 2px 2px 0 0;
    background: #fff;
    border: 1px solid #8a8a8a;
    font-size: 10px;
    line-height: 7px;
    text-align: center;
    color: #445;
}

.tree .vscroll .thumb {
    height: 184px;
}

.movers {
    display: flex;
    flex-direction: column;
    justify-content: flex-end;
    align-items: center;
    gap: 9px;
    width: 28px;
    padding-bottom: 3px;
}

.playlist-col {
    display: flex;
    flex-direction: column;
    flex: 1;
}

.playlist-head {
    display: flex;
    justify-content: flex-end;
    align-items: center;
    gap: 6px;
    height: 30px;
    padding: 2px 3px 0 0;
}

.playlist {
    flex: 1;
    padding-right: 1px;
    font-family: "Noto Sans", sans-serif;
}

.playlist table {
    height: 260px;
}

.playlist th {
    height: 25px;
    font-size: 14px;
}

.playlist td {
    font-size: 16px;
}

.playlist .time {
    font-size: 14px;
}

.p-dur {
    width: 66px;
    border: 1px solid #e5e5e5;
    border-width: 0 1px;
}

.playlist th:last-child,
.playlist td:last-child {
    padding-left: 7px;
}

.current {
    background: #008000;
    color: #fff;
}

/* Controles de reproduccion */
.transport {
    display: flex;
    align-items: center;
    height: 32px;
    background: #fff;
    border-bottom: 1px solid #c8c8c8;
}

.transport > button {
    display: flex;
    justify-content: center;
    width: 44px;
}

.transport .sep {
    height: 25px;
    margin: 0 4px 0 2px;
}

.transport .grip {
    height: 28px;
}

.seek {
    display: flex;
    align-items: center;
    height: 100%;
    margin-left: auto;
    padding-right: 8px;
    border-left: 1px solid #bbb;
}

.seek input {
    width: 82px;
    height: 20px;
    margin: 0 0 0 7px;
    appearance: none;
    background: linear-gradient(#dcdcdc, #dcdcdc) center / 100% 3px no-repeat;
}

.seek input::-webkit-slider-thumb {
    appearance: none;
    width: 10px;
    height: 18px;
    background: #c9c9c9;
    clip-path: polygon(0 0, 100% 0, 100% 75%, 50% 100%, 0 75%);
}

.carts {
    display: flex;
    align-items: center;
    height: 24px;
    padding: 1px 10px 0 0;
    background: #fff;
    border-bottom: 1px solid #c8c8c8;
}

.cart-list {
    display: grid;
    grid-template-columns: repeat(9, 1fr);
    flex: 1;
    min-width: 0;
}

.cart-list button {
    display: flex;
    align-items: center;
    gap: 4px;
    min-width: 0;
    overflow: hidden;
    white-space: nowrap;
    color: #0a7a0a;
}

.cart-list b {
    flex: none;
    width: 15px;
    margin-left: 3px;
    border-radius: 50%;
    background: linear-gradient(#8fbdf0, #2a6dc4);
    font-family: "Liberation Sans", sans-serif;
    font-size: 12px;
    line-height: 15px;
    color: #fff;
}

.bank {
    width: 65px;
}

.statusbar {
    display: grid;
    grid-template-columns: 1fr 189px 44px;
    height: 21px;
}

.statusbar span + span {
    border-left: 1px solid #d5d5d5;
}

/* Ventana de eventos */
.dialog {
    position: absolute;
    top: 131px;
    left: 0;
    right: 0;
    width: 556px;
    margin: 0 auto;
    background: #f0f0f0;
    border: 1px solid #064e70;
}

.dialog-title {
    display: flex;
    align-items: center;
    height: 24px;
    padding-left: 3px;
    background: #064e70;
    color: #fff;
}

.dialog-title h2 {
    margin: 0 auto 0 0;
    font-family: "Open Sans", sans-serif;
    font-size: 11px;
    font-weight: normal;
}

.dialog-title button {
    display: flex;
    justify-content: center;
    width: 43px;
}

.dialog-body {
    padding: 13px 9px 17px;
}

.intro {
    display: flex;
    gap: 7px;
    height: 46px;
    padding-left: 4px;
}

.intro p {
    width: 490px;
    margin: 3px 0 0;
}

.events {
    display: grid;
    grid-template-columns: 1fr 14px;
    grid-template-rows: 257px 15px;
    padding: 0 2px 2px 0;
}

.events-view {
    overflow: hidden;
}

.events th {
    height: 24px;
    padding-left: 5px;
    border-right: 1px solid #e5e5e5;
}

.events td {
    height: 16px;
    padding-left: 5px;
}

.events th:last-child,
.events td:last-child {
    padding-left: 6px;
}

.events label {
    display: flex;
    align-items: center;
    height: 16px;
    white-space: nowrap;
}

.events label .ico {
    margin: 0 1px 0 2px;
}

.events input {
    width: 12px;
    height: 12px;
    margin: 0 1px 3px 0;
    appearance: none;
    background: #fff;
    border: 1px solid #333;
}

.events input:checked::before {
    content: "";
    display: block;
    width: 7px;
    height: 3px;
    margin: 2px 0 0 1px;
    border: solid #222;
    border-width: 0 0 1px 1px;
    transform: rotate(-45deg);
}

.e-hora {
    width: 94px;
}

.e-com {
    width: 75px;
}

.e-pri {
    width: 56px;
}

.e-esp {
    width: 58px;
}

.events .vscroll .thumb {
    height: 85px;
    margin-top: 5px;
}

.hscroll {
    display: flex;
    align-items: center;
    padding: 0 5px;
    background: #f0f0f0;
    color: #444;
}

.hscroll .thumb {
    width: 312px;
    height: 14px;
    margin: 0 auto 0 5px;
    background: #cdcdcd;
}

.corner {
    background: #f0f0f0;
}

.buttons {
    display: flex;
    justify-content: flex-end;
    gap: 11px;
    padding-top: 15px;
}

.buttons button {
    width: 69px;
    height: 20px;
    background: #e1e1e1;
    border: 1px solid #adadad;
}

.buttons .wide {
    width: 96px;
}

.buttons button:disabled {
    background: #ccc;
    border-color: #bfbfbf;
    color: #888;
}

.dialog hr {
    height: 1px;
    margin: 10px 0 -4px;
    border: none;
    background: #a5a5a5;
}

.resize {
    position: absolute;
    right: 2px;
    bottom: 2px;
}

/* Barra de tareas */
.taskbar {
    display: flex;
    align-items: stretch;
    height: 38px;
    padding-right: 3px;
    background: #eee;
}

.start {
    display: flex;
    align-items: center;
    justify-content: center;
    width: 45px;
}

.tasks {
    display: flex;
    gap: 8px;
    margin-left: 6px;
}

.task {
    display: flex;
    align-items: center;
    gap: 5px;
    width: 143px;
    padding: 0 5px;
    border-bottom: 3px solid #2e8dbd;
    text-align: left;
    white-space: nowrap;
}

.task.playing {
    background: #d6d6d6;
    border-color: #57d94a;
}

.task.active {
    width: 150px;
    margin-left: -4px;
    padding-left: 9px;
    background: #fafafa;
}

.tray {
    display: flex;
    align-items: center;
    gap: 9px;
    margin-left: auto;
    padding-right: 16px;
    border-right: 1px solid #c5c5c5;
}

.tray time {
    margin-left: 3px;
    line-height: 17px;
    text-align: center;
}

.notes {
    position: relative;
    margin: 0 3px;
}

.notes i {
    position: absolute;
    left: 7px;
    top: 6px;
    width: 15px;
    border: 1px solid #777;
    border-radius: 50%;
    background: #ddd;
    font-size: 10px;
    font-style: normal;
    line-height: 13px;
}
```
